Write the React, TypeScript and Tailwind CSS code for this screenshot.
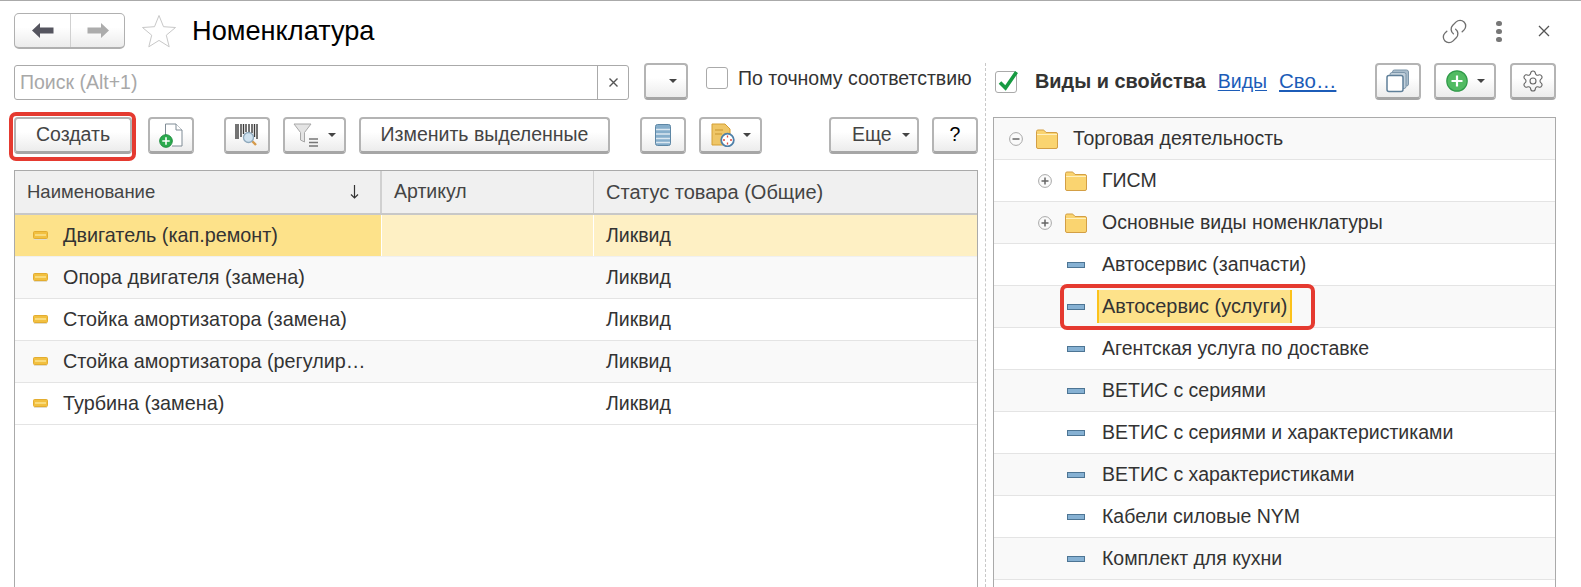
import { Link, Settings } from 'lucide-react';
import type { ReactNode } from 'react';

const rows = [
  'Двигатель (кап.ремонт)',
  'Опора двигателя (замена)',
  'Стойка амортизатора (замена)',
  'Стойка амортизатора (регулир…',
  'Турбина (замена)',
];

const leaves = [
  'Автосервис (запчасти)',
  'Автосервис (услуги)',
  'Агентская услуга по доставке',
  'ВЕТИС с сериями',
  'ВЕТИС с сериями и характеристиками',
  'ВЕТИС с характеристиками',
  'Кабели силовые NYM',
  'Комплект для кухни',
];

const Caret = () => <span className="w-0 h-0 border-x-[4px] border-x-transparent border-t-[4px] border-t-[#444]" />;

const Btn = ({ className = '', children }: { className?: string; children?: ReactNode }) => (
  <div
    className={`relative h-[37px] flex items-center justify-center shrink-0 rounded-[4px] border-2 border-[#b4b4b4] border-b-[3px] border-b-[#a6a6a6] bg-gradient-to-b from-white from-40% to-[#ececec] text-[19.5px] text-[#444] ${className}`}
  >
    {children}
  </div>
);

const Folder = () => (
  <svg width="22" height="20" viewBox="0 0 22 20" className="shrink-0">
    <path d="M.5 18V2.5a1.5 1.5 0 0 1 1.500-1.500h5a2 2 0 0 1 1.600.8L10 3.500h10a1.500 1.500 0 0 1 1.500 1.500v13a1.500 1.500 0 0 1-1.500 1.500H2A1.500 1.500 0 0 1 .5 18Z" fill="#fad470" stroke="#d39f45" />
    <path d="M1 5.500h20" stroke="#fff0c0" />
  </svg>
);

const Toggle = ({ open }: { open?: boolean }) => (
  <svg width="14" height="14" viewBox="0 0 14 14" className="shrink-0">
    <circle cx="7" cy="7" r="6.400" fill="#fafafa" stroke="#a8a8a8" />
    <path d={open ? 'M3.500 7h7' : 'M3.500 7h7M7 3.500v7'} stroke="#666" strokeWidth="1.500" />
  </svg>
);

const GreenPlus = ({ size }: { size: number }) => (
  <svg width={size} height={size} viewBox="0 0 22 22" className="shrink-0">
    <circle cx="11" cy="11" r="10.200" fill="#52bb62" stroke="#2f9a48" strokeWidth="1.200" />
    <path d="M5.500 11h11M11 5.500v11" stroke="#fff" strokeWidth="2.200" />
  </svg>
);

const Marker = () => (
  <svg width="15" height="9" viewBox="0 0 15 9" className="shrink-0">
    <rect x=".5" y=".5" width="14" height="7" rx="1" fill="#f2c040" stroke="#e3ad30" />
    <path d="M2 4h11" stroke="#fbe590" strokeWidth="1.500" />
    <path d="M1 8.500h13" stroke="#e2dccb" />
  </svg>
);

const TreeRow = ({ indent, open, label }: { indent: string; open: boolean; label: string }) => (
  <div className={`h-[42px] flex items-center border-b border-[#e4e4e4] ${indent} ${open ? 'bg-[#f9f9f9]' : 'bg-white'}`}>
    <Toggle open={open} />
    <span className="ml-[13px]"><Folder /></span>
    <span className="ml-[15px]">{label}</span>
  </div>
);

export default function App() {
  return (
    <div className="w-[1581px] h-[587px] overflow-hidden bg-white border-t border-[#aaa] text-[19.5px] text-[#333] font-['Liberation_Sans',Arial,sans-serif]">
      {/* Title bar */}
      <div className="flex items-center h-[36px] mt-[12px] pl-[14px]">
        <div className="w-[111px] h-[36px] flex rounded-[5px] border border-[#b0b0b0] border-b-2 bg-gradient-to-b from-white from-40% to-[#ececec]">
          <div className="w-[56px] flex items-center justify-center border-r border-[#d0d0d0]">
            <svg width="22" height="15" viewBox="0 0 22 15"><path d="M0 7.500 8 0v4.500h13.500v6H8V15Z" fill="#55555f" /></svg>
          </div>
          <div className="flex-1 flex items-center justify-center">
            <svg width="22" height="15" viewBox="0 0 22 15"><path d="M22 7.500 14 0v4.500H.5v6H14V15Z" fill="#acacac" /></svg>
          </div>
        </div>
        <svg width="36" height="34" viewBox="0 0 36 34" className="ml-[16px]">
          <path d="M18 1.500 22.500 12.700 34.500 13.500 25.300 21.200 28.200 32.800 18 26.400 7.800 32.800 10.700 21.200 1.500 13.500 13.500 12.700Z" fill="#fff" stroke="#c8c8c8" />
        </svg>
        <h1 className="ml-[15px] text-[27.2px] leading-none text-black">Номенклатура</h1>
        <div className="ml-auto flex items-center">
          <Link size={27} strokeWidth={1.2} color="#707070" className="-scale-x-100 rotate-90" />
          <div className="ml-[28px] flex flex-col gap-[3px]">
            <span className="w-[6px] h-[5px] rounded-full bg-[#777]" />
            <span className="w-[6px] h-[5px] rounded-full bg-[#777]" />
            <span className="w-[6px] h-[5px] rounded-full bg-[#777]" />
          </div>
          <svg width="12" height="12" viewBox="0 0 12 12" className="ml-[36px] mr-[31px]"><path d="M1 1l10 10M11 1 1 11" stroke="#555" strokeWidth="1.300" /></svg>
        </div>
      </div>

      <div className="flex mt-[14px] pl-[14px] h-[524px]">
        {/* Left panel */}
        <div className="w-[964px] shrink-0 flex flex-col">
          <div className="flex items-end h-[37px]">
            <div className="w-[615px] h-[35px] flex rounded-[3px] border border-[#aaa] bg-white">
              <span className="flex-1 pl-[5px] leading-[33px] text-[#a8a8a8]">Поиск (Alt+1)</span>
              <div className="w-[31px] flex items-center justify-center border-l border-[#aaa]">
                <svg width="9" height="9" viewBox="0 0 9 9"><path d="M.5.5l8 8M8.500.5l-8 8" stroke="#555" strokeWidth="1.400" /></svg>
              </div>
            </div>
            <Btn className="w-[44px] ml-[15px] !justify-end pr-[9px]"><Caret /></Btn>
            <div className="ml-[18px] mb-[7px] flex items-center">
              <span className="w-[22px] h-[22px] rounded-[3px] border border-[#aaa] bg-white" />
              <span className="ml-[10px] whitespace-nowrap">По точному соответствию</span>
            </div>
          </div>

          <div className="flex items-center mt-[17px]">
            <Btn className="w-[118px] relative">
              Создать
              <span className="absolute -left-[7px] -right-[6px] -top-[7px] -bottom-[10px] rounded-[7px] border-[4px] border-[#e53a30]" />
            </Btn>
            <Btn className="w-[46px] ml-[16px]">
              <svg width="24" height="25" viewBox="0 0 24 25">
                <path d="M6.500 15V1h10.500l6 6V23H13" fill="#fff" stroke="#7f8b95" />
                <path d="M17 1v6h6" fill="#fff" stroke="#7f8b95" />
                <circle cx="7" cy="18" r="6.300" fill="#2bab4e" stroke="#1d8c3d" />
                <path d="M3.300 18h7.400M7 14.300v7.400" stroke="#fff" strokeWidth="1.600" />
              </svg>
            </Btn>
            <Btn className="w-[46px] ml-[30px]">
              <svg width="24" height="24" viewBox="0 0 24 24">
                <path d="M1 1v15M3 1v15M6 1v13M8.500 1v10M11 1v8M14 1v8M17 1v9M19.500 1v13M22 1v15" stroke="#3a3a3a" strokeWidth="1.400" />
                <path d="m17 18 4 4" stroke="#d69a4a" strokeWidth="2.400" />
                <circle cx="13.500" cy="14.500" r="5" fill="#cfe2f0" stroke="#8fa9bd" strokeWidth="1.300" />
              </svg>
            </Btn>
            <Btn className="w-[63px] ml-[13px] gap-[9px]">
              <svg width="26" height="25" viewBox="0 0 26 25">
                <path d="M1 1h17l-6.500 8.500V19L7.500 17V9.500Z" fill="#e4e4e4" stroke="#a8a8a8" />
                <path d="M16 16h9M16 19.500h9M16 23h9" stroke="#777" strokeWidth="1.400" />
              </svg>
              <Caret />
            </Btn>
            <Btn className="w-[251px] ml-[13px]">Изменить выделенные</Btn>
            <Btn className="w-[46px] ml-[30px]">
              <svg width="16" height="22" viewBox="0 0 16 22">
                <rect x=".5" y=".5" width="15" height="21" rx="2" fill="#86aecb" stroke="#5e87a5" />
                <path d="M1 5.500h14M1 10h14M1 14.500h14M1 18.500h14" stroke="#dbe8f1" strokeWidth="1.500" />
              </svg>
            </Btn>
            <Btn className="w-[63px] ml-[13px] gap-[8px]">
              <svg width="24" height="24" viewBox="0 0 24 24">
                <path d="M1 1h13l5 5v16H1Z" fill="#efc667" stroke="#d49f34" />
                <path d="M4 7h8M4 11h7" stroke="#c9952f" />
                <circle cx="16.500" cy="17" r="6.300" fill="#fff" stroke="#4d7fa8" strokeWidth="1.800" />
                <path d="M16.500 12.500v2M16.500 19.500v2M12 17h2M19 17h2" stroke="#e0483a" strokeWidth="1.300" />
              </svg>
              <Caret />
            </Btn>
            <Btn className="w-[90px] ml-[67px] !justify-start pl-[21px] gap-[10px]">Еще <Caret /></Btn>
            <Btn className="w-[46px] ml-[13px] text-black">?</Btn>
          </div>

          <div className="mt-[16px] flex-1 border-x border-t border-[#aaa] bg-white">
            <div className="flex h-[44px] bg-[#f0f0f0] border-b-2 border-[#c8c8c8] text-[#444]">
              <div className="w-[367px] shrink-0 flex items-center justify-between pl-[12px] pr-[21px] border-r-2 border-[#d0d0d0]">
                <span className="text-[18.5px]">Наименование</span>
                <svg width="9" height="14" viewBox="0 0 9 14"><path d="M4.500 0v13M1 9.500l3.500 3.500L8 9.500" fill="none" stroke="#333" strokeWidth="1.200" /></svg>
              </div>
              <div className="w-[212px] shrink-0 flex items-center pl-[12px] border-r border-[#d0d0d0]">Артикул</div>
              <div className="flex-1 flex items-center pl-[12px] text-[20px]">Статус товара (Общие)</div>
            </div>
            {rows.map((name, i) => (
              <div
                key={name}
                className={`flex h-[42px] border-b ${i === 0 ? 'border-[#f0f0f0] bg-[#fef0c4]' : i % 2 ? 'border-[#e4e4e4] bg-[#f9f9f9]' : 'border-[#e4e4e4] bg-white'}`}
              >
                <div className={`w-[367px] shrink-0 flex items-center pl-[18px] ${i === 0 ? 'bg-[#fde28a] border-r border-white' : ''}`}>
                  <Marker />
                  <span className="ml-[15px] whitespace-nowrap text-[19.8px]">{name}</span>
                </div>
                <div className={`w-[212px] shrink-0 ${i === 0 ? 'border-r border-white' : ''}`} />
                <div className="flex-1 flex items-center pl-[12px]">Ликвид</div>
              </div>
            ))}
          </div>
        </div>

        {/* Divider */}
        <div className="ml-[7px] shrink-0 border-l border-dashed border-[#c8c8c8]" />

        {/* Right panel */}
        <div className="ml-[7px] w-[563px] shrink-0 flex flex-col">
          <div className="flex items-center h-[37px]">
            <span className="relative ml-[2px] w-[22px] h-[22px] rounded-[3px] border border-[#aaa] bg-white">
              <svg width="22" height="24" viewBox="0 0 22 24" className="absolute left-[1px] -top-[3px]">
                <path d="M3 13.500 8.500 19 19.500 3" fill="none" stroke="#169a41" strokeWidth="3.600" />
              </svg>
            </span>
            <b className="ml-[18px] text-[#333] whitespace-nowrap text-[19.9px]">Виды и свойства</b>
            <a className="ml-[12px] text-[#1c5cb8] underline underline-offset-2">Виды</a>
            <a className="ml-[12px] text-[#1c5cb8] underline underline-offset-2 text-[20.5px]">Сво…</a>
            <div className="ml-auto flex">
              <Btn className="w-[46px]">
                <svg width="24" height="24" viewBox="0 0 24 24">
                  <rect x="6.500" y="1" width="16" height="16" rx="2" fill="#a9bccb" stroke="#7d96aa" />
                  <rect x="4" y="3.500" width="16" height="16" rx="2" fill="#c2d0db" stroke="#7d96aa" />
                  <rect x="1" y="6.500" width="16" height="16" rx="2" fill="#fff" stroke="#5f7f99" strokeWidth="1.500" />
                </svg>
              </Btn>
              <Btn className="w-[62px] ml-[13px] gap-[9px]"><GreenPlus size={22} /><Caret /></Btn>
              <Btn className="w-[46px] ml-[14px]"><Settings size={24} strokeWidth={1.1} color="#666" /></Btn>
            </div>
          </div>

          <div className="mt-[17px] flex-1 border-x border-t border-[#aaa] bg-white overflow-hidden">
            <TreeRow indent="pl-[15px]" open label="Торговая деятельность" />
            <TreeRow indent="pl-[44px]" open={false} label="ГИСМ" />
            <TreeRow indent="pl-[44px] !bg-[#f9f9f9]" open={false} label="Основные виды номенклатуры" />
            {leaves.map((name, i) => (
              <div key={name} className={`h-[42px] flex items-center pl-[73px] border-b border-[#e4e4e4] ${i % 2 ? 'bg-[#f9f9f9]' : 'bg-white'}`}>
                <span className="w-[18px] h-[6px] shrink-0 border border-[#4d7594] bg-[#86b1d3]" />
                {name === 'Автосервис (услуги)' ? (
                  <span className="relative ml-[12px] h-[33px] flex items-center px-[3px] border-x-2 border-[#fcc21b] bg-[#fde28a] text-[19.9px]">
                    {name}
                    <span className="absolute -left-[39px] -right-[25px] -top-[6px] -bottom-[7px] rounded-[7px] border-[4px] border-[#e53a30]" />
                  </span>
                ) : (
                  <span className="ml-[17px]">{name}</span>
                )}
              </div>
            ))}
          </div>
        </div>
      </div>
    </div>
  );
}
